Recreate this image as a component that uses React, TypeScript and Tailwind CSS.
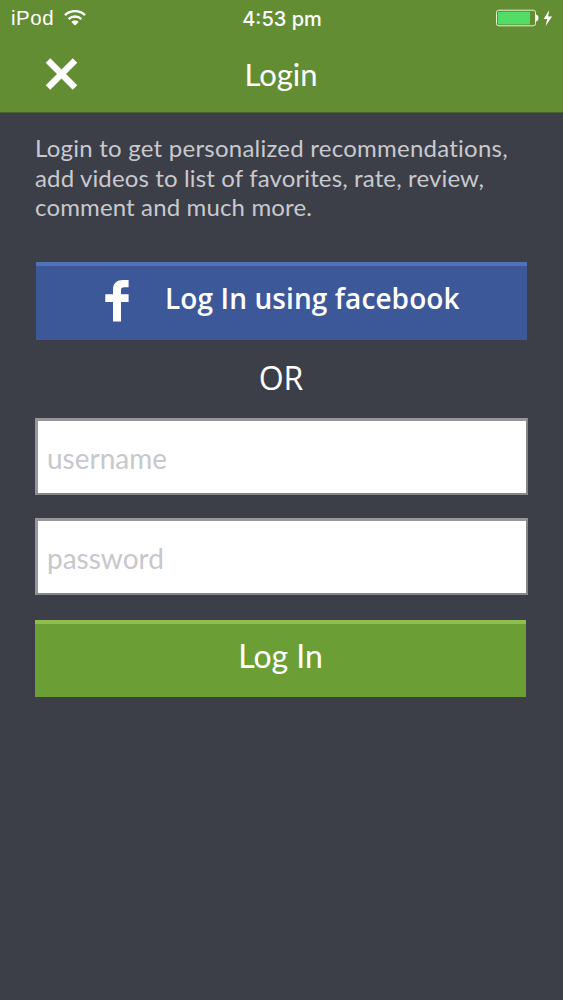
const fields = [
  { name: "username", type: "text" },
  { name: "password", type: "password" },
] as const;

function StatusBar() {
  return (
    <div className="grid h-9 grid-cols-3 items-center pr-[10px] pl-[11px] font-['Liberation_Sans',Arial,sans-serif] text-[20px] leading-none">
      <div className="flex items-center gap-[10px]">
        <span className="text-[20.5px] tracking-[0.5px]">iPod</span>
        <svg className="h-4 w-[22px]" viewBox="0 0 22 16" fill="none" aria-hidden="true">
          <path d="M1 5.2C6.5-.2 15.5-.2 21 5.2" stroke="currentColor" strokeWidth="2.4" />
          <path d="M4.6 9.1c3.6-3.4 9.2-3.4 12.8 0" stroke="currentColor" strokeWidth="2.4" />
          <path d="M7.4 12c2-1.9 5.2-1.9 7.2 0L11 15.6z" fill="currentColor" />
        </svg>
      </div>
      <span className="pt-px text-center font-['Inter',sans-serif] font-medium whitespace-nowrap">
        4:53 pm
      </span>
      <div className="flex items-center justify-end">
        <svg className="h-[18px] w-[58px]" viewBox="0 0 58 18" aria-hidden="true">
          <rect x="1.5" y="1.2" width="39" height="15.6" rx="2.2" fill="none" stroke="#e4f4cf" strokeWidth="1" />
          <rect x="3" y="2.8" width="32" height="12.6" fill="#53dc66" />
          <path d="M41 5.5c3.300.7 3.300 6.300 0 7z" fill="#fff" />
          <path d="M54.200 1 48.700 10h3.500l-1.600 7 6.500-9.600h-4z" fill="#fff" />
        </svg>
      </div>
    </div>
  );
}

export default function App() {
  return (
    <div className="flex h-[1000px] w-[563px] flex-col overflow-hidden bg-[#3c3f48] text-white">
      <header className="h-[113px] shrink-0 border-b border-[#496032] bg-[#628d32]">
        <StatusBar />
        <div className="grid h-[76px] grid-cols-3 items-center px-[45px]">
          <button type="button" aria-label="Close" className="w-8">
            <svg className="h-8 w-[33px]" viewBox="0 0 33 32" aria-hidden="true">
              <path d="M3 2.500 30 29.500M30 2.500 3 29.500" stroke="#fff" strokeWidth="6.400" />
            </svg>
          </button>
          <h1 className="pr-px text-center font-['Lato',sans-serif] text-[31px] leading-none">
            Login
          </h1>
        </div>
      </header>

      <main className="flex flex-col px-[35px] pt-[20px]">
        <p className="font-['Lato',sans-serif] text-[24px] leading-[29.500px] tracking-[0.14px] whitespace-nowrap text-[#c9c9cf]">
          <span className="tracking-[0.24px]">Login to get personalized recommendations,</span>
          <br />
          add videos to list of favorites, rate, review,
          <br />
          comment and much more.
        </p>

        <button
          type="button"
          className="mt-[40px] ml-px flex h-[78px] w-[491px] items-start border-t-4 border-[#5272b8] bg-[#3c5899] pt-[13px] pl-[69px]"
        >
          <svg className="h-[43px] w-6" viewBox="0 0 24 43" aria-hidden="true">
            <path
              d="M8 42.500V23H.3v-7.700H8V10.500C8 4.200 12 1 18 1h5.600v7.300h-4.200c-2.500 0-3.400 1-3.400 3.200v3.800h7.600V23H16v19.500z"
              fill="#fff"
            />
          </svg>
          <span className="ml-[36px] pt-px font-['Open_Sans',sans-serif] text-[28px] leading-[37px] font-semibold tracking-[0.1px] whitespace-nowrap">
            Log In using facebook
          </span>
        </button>

        <div className="flex h-[78px] items-center justify-center pr-px pb-0.5 font-['Open_Sans',sans-serif] text-[32px]">
          OR
        </div>

        <form className="flex flex-col">
          {fields.map(({ name, type }) => (
            <input
              key={name}
              type={type}
              placeholder={name}
              className="mb-[23px] h-[77px] w-[493px] rounded-none border-2 border-t-3 border-l-3 border-[#85858a] border-t-[#96969b] border-l-[#96969b] bg-white px-[9px] pt-0.5 font-['Lato',sans-serif] text-[28px] text-black placeholder:text-[#c7c7cc]"
            />
          ))}
          <button
            type="button"
            className="mt-[2px] h-[77px] w-[491px] border-t-4 border-[#8fbe50] bg-[#6b9e34] pb-[9px] font-['Lato',sans-serif] text-[32px] leading-none"
          >
            Log In
          </button>
        </form>
      </main>
    </div>
  );
}
